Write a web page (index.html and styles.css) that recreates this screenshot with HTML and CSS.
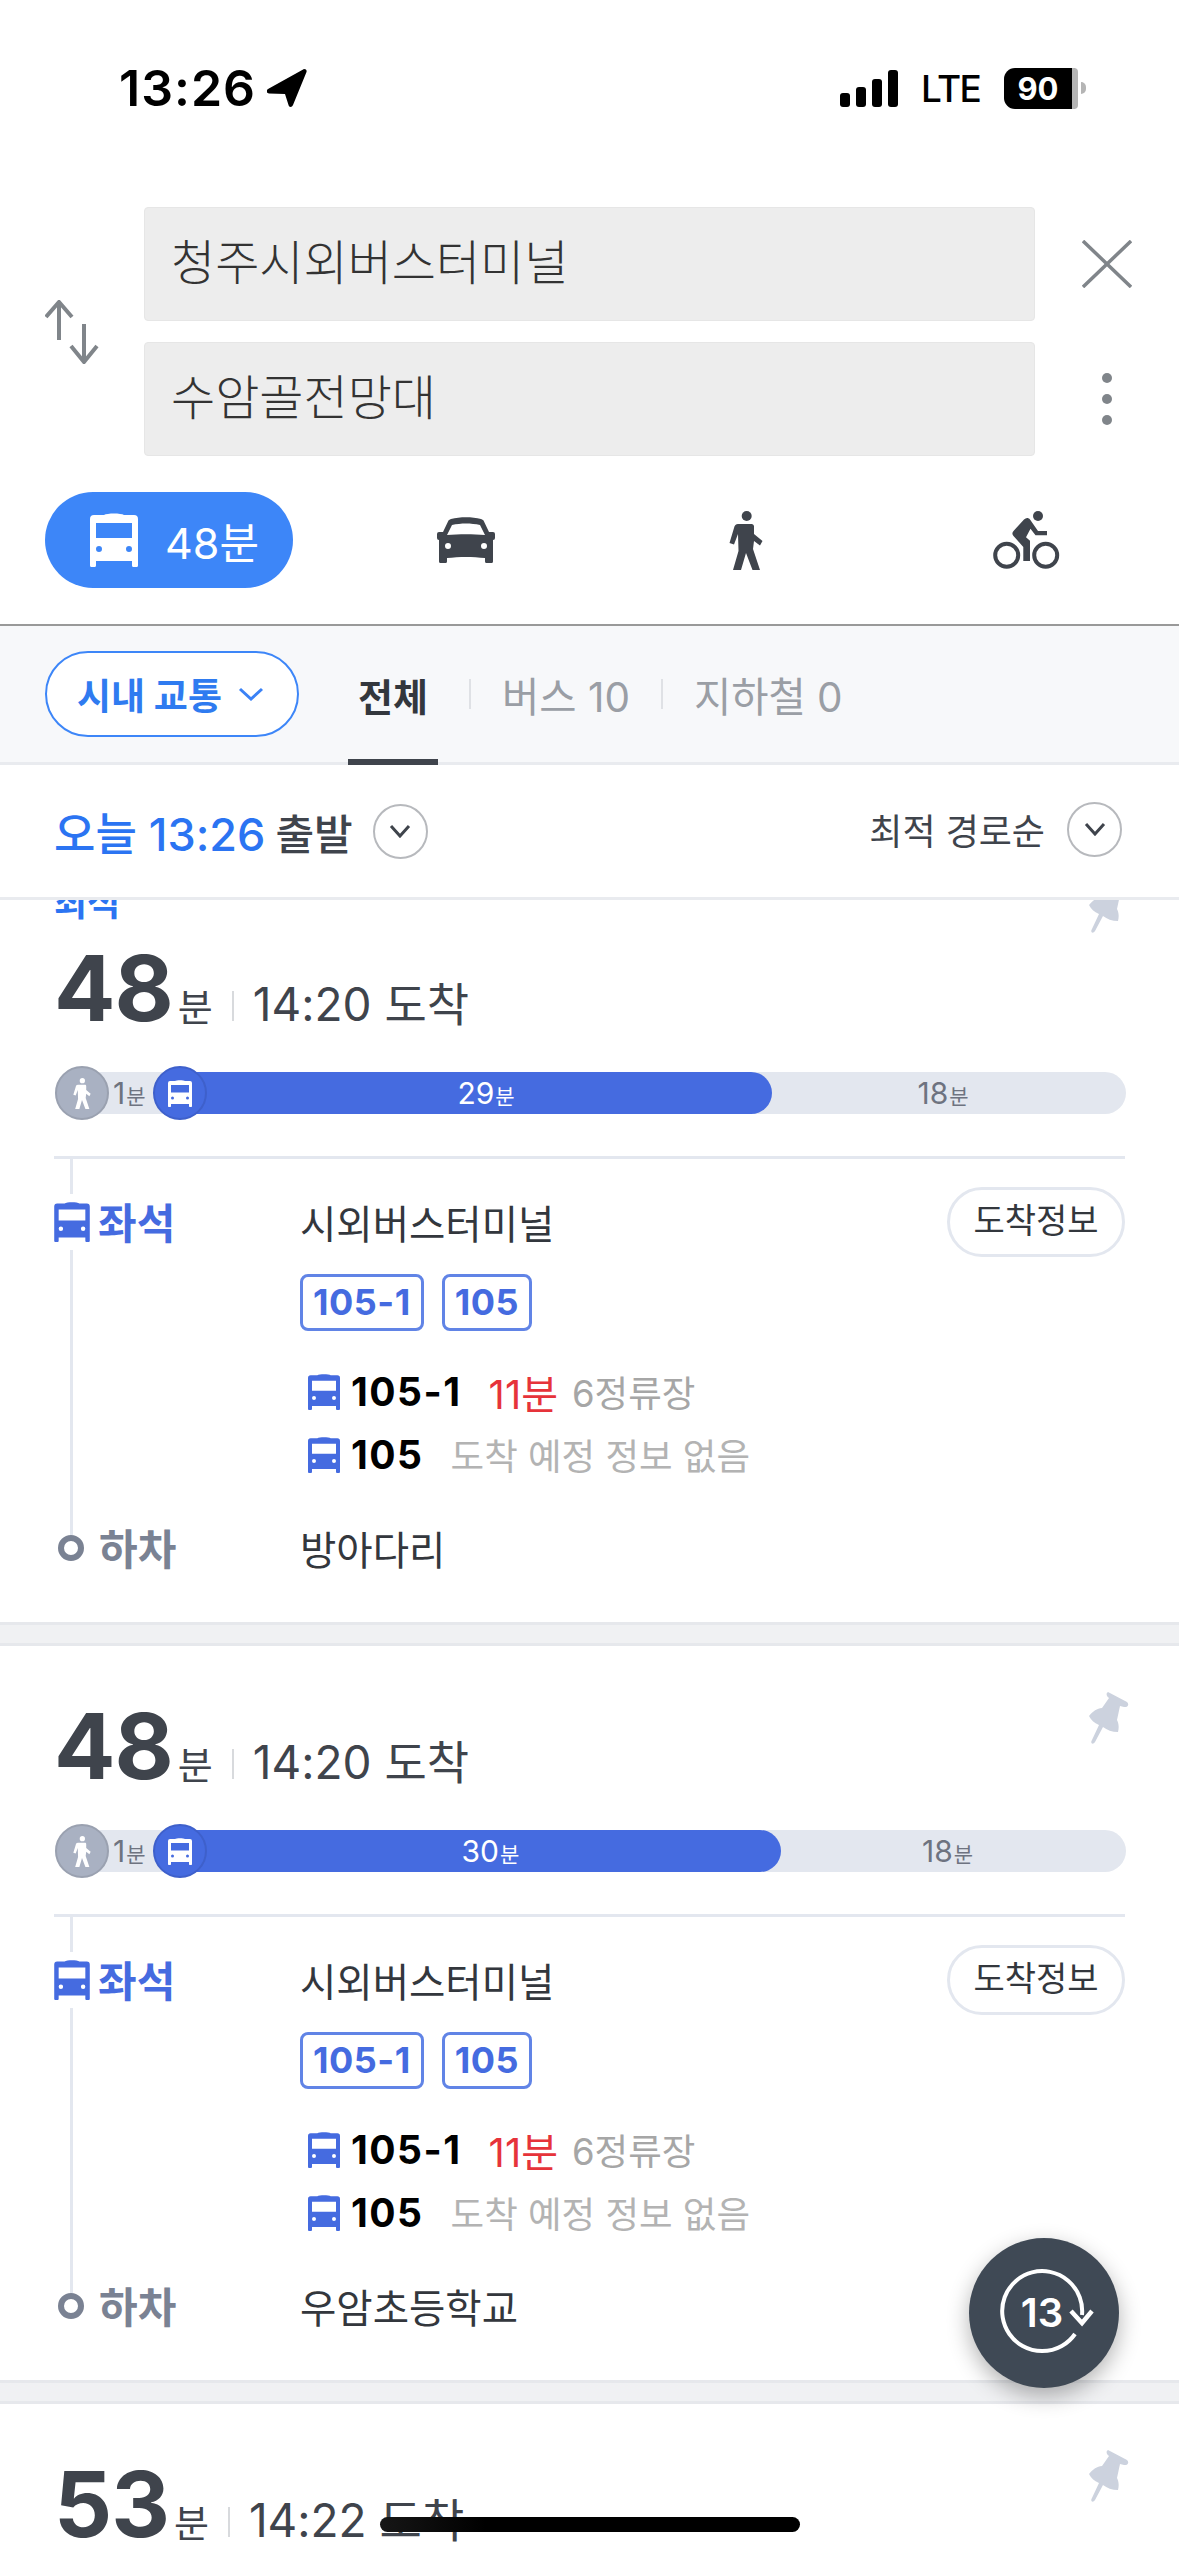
FILE: index.html
```html
<!DOCTYPE html>
<html lang="ko">
<head>
  <meta charset="UTF-8">
  <title>길찾기</title>
  <link rel="stylesheet" href="styles.css">
</head>
<body>
  <svg class="sprite" width="0" height="0">
    <symbol id="i-bus" viewBox="0 0 48 54">
      <path fill-rule="evenodd" d="M14 2c3-2 17-2 20 0h10a4 4 0 0 1 4 4v46.5a1.5 1.5 0 0 1-1.5 1.5h-3a1.5 1.5 0 0 1-1.5-1.5V48H6v4.5A1.5 1.5 0 0 1 4.5 54h-3A1.5 1.5 0 0 1 0 52.5V6a4 4 0 0 1 4-4zM6 10v15h36V10zM9 33a3 3 0 1 0 0 6 3 3 0 1 0 0-6zM39 33a3 3 0 1 0 0 6 3 3 0 1 0 0-6z"/>
    </symbol>
    <symbol id="i-walk" viewBox="0 0 34 59">
      <circle cx="17.700" cy="5" r="5"/>
      <path d="M9 13h13.500c1.500 0 2.500 1 2.500 2.500V23l8.500 7-2.500 4.500-6-4.500-1 8 7 21h-7.500L17 42l-5 17H4l5.500-19-.5-17-4 10.500-4.500-1.500L5 17c.5-2.500 2-4 4-4z"/>
    </symbol>
    <symbol id="i-pin" viewBox="0 0 42 52">
      <path d="M20 0l19 10c3 3 0 5.500-3 5l-4-1-3 14c2 4 2 8 1 12-6 0-11-2-15-5L7 50c-2 3-4.500 1.500-3.500-1L11 33c-5-2-8-5-10-9 4-5 8-7.500 13-8l7-10c-3-2-3-5-1-6z"/>
    </symbol>
  </svg>

  <div class="screen">
    <div class="statusbar">
      <div class="status-left">
        <span class="clock">13:26</span>
        <svg class="loc-arrow" viewBox="0 0 40 38"><path d="M37 0c2 0 3 1 2.500 3L26 36c-1 2.500-4 2.500-4.500 0L18 25 2 24.500c-2.500 0-3-3-1-4.500z"/></svg>
      </div>
      <div class="status-right">
        <span class="signal"><i></i><i></i><i></i><i></i></span>
        <span class="lte">LTE</span>
        <span class="battery"><span class="battery-fill">90</span><span class="battery-nub"></span></span>
      </div>
    </div>

    <div class="search">
      <svg class="swap" viewBox="0 0 54 64" fill="none" stroke="#80858a" stroke-width="4">
        <path d="M14 40V2M1 17 14 2l13 15"/>
        <path d="M39 24v38M26 46l13 16 13-16"/>
      </svg>
      <div class="search-fields">
        <div class="field">청주시외버스터미널</div>
        <div class="field">수암골전망대</div>
      </div>
      <div class="search-side">
        <div class="side-cell">
          <svg class="close" viewBox="0 0 50 48" fill="none" stroke="#80858a" stroke-width="3.500"><path d="M1 1l48 46M49 1 1 47"/></svg>
        </div>
        <div class="side-cell">
          <span class="dots"><i></i><i></i><i></i></span>
        </div>
      </div>
    </div>

    <div class="modes">
      <div class="mode">
        <div class="mode-pill">
          <svg class="mode-bus"><use href="#i-bus"/></svg>
          <span>48분</span>
        </div>
      </div>
      <div class="mode">
        <svg class="mode-car" viewBox="0 0 58 46"><path fill-rule="evenodd" d="M14 2c9-2.500 21-2.500 30 0 1.500.5 2.500 1 3 2.500L52 15h4a2 2 0 0 1 2 2v4a2 2 0 0 1-2 2v21.500a1.500 1.500 0 0 1-1.500 1.500h-5a1.500 1.500 0 0 1-1.500-1.500V41c-12-1.500-26-1.500-38 0v3.500A1.500 1.500 0 0 1 8.500 46h-5A1.500 1.500 0 0 1 2 44.500V23a2 2 0 0 1-2-2v-4a2 2 0 0 1 2-2h4l5-10.500c.5-1.500 1.500-2 3-2.500zM15 8l-5 10c12-1 26-1 38 0L43 8C34 6 24 6 15 8zM11 26a3 3 0 1 0 0 6 3 3 0 1 0 0-6zM47 26a3 3 0 1 0 0 6 3 3 0 1 0 0-6z"/></svg>
      </div>
      <div class="mode">
        <svg class="mode-walk"><use href="#i-walk"/></svg>
      </div>
      <div class="mode">
        <svg class="mode-bike" viewBox="0 0 67 58">
          <circle cx="13.700" cy="44.300" r="11.500" fill="none" stroke-width="4"/>
          <circle cx="52.700" cy="44.300" r="11.500" fill="none" stroke-width="4"/>
          <circle cx="45" cy="5" r="5" stroke="none"/>
          <path stroke="none" d="M31 8.500c2-2 4.500-2 6 0l8 11.500h9v4.300H42.500l-5-6.500-4.500 8.500 4 3.500V50h-6.700V36L20.500 25c-1.500-1.500-1.500-3.500 0-5z"/>
        </svg>
      </div>
    </div>

    <div class="tabs">
      <div class="scope">시내 교통
        <svg class="scope-chevron" viewBox="0 0 26 14" fill="none" stroke="#3b82f6" stroke-width="3"><path d="M2 2l11 10L24 2"/></svg>
      </div>
      <div class="tab tab-active">전체</div>
      <span class="tab-sep"></span>
      <div class="tab">버스 10</div>
      <span class="tab-sep"></span>
      <div class="tab">지하철 0</div>
    </div>

    <div class="depart">
      <div class="depart-left">
        <span class="depart-time">오늘 13:26</span>
        <span class="depart-word">출발</span>
        <span class="round-btn"><svg viewBox="0 0 24 14" fill="none" stroke="#3f444c" stroke-width="3"><path d="M3 2l9 10 9-10"/></svg></span>
      </div>
      <div class="depart-right">
        <span>최적 경로순</span>
        <span class="round-btn"><svg viewBox="0 0 24 14" fill="none" stroke="#3f444c" stroke-width="3"><path d="M3 2l9 10 9-10"/></svg></span>
      </div>
    </div>

    <div class="route-list">
      <section class="route route-best">
        <svg class="pin"><use href="#i-pin"/></svg>
        <div class="best-label">최적</div>
        <div class="route-time">
          <b>48</b><span class="unit">분</span><span class="time-sep"></span><span class="arrive">14:20 도착</span>
        </div>
        <div class="bar">
          <div class="seg-walk">
            <span class="bar-dot dot-walk"><svg><use href="#i-walk"/></svg></span>
            <span class="seg-text">1<small>분</small></span>
          </div>
          <div class="seg-bus" style="width: 592px">
            <span class="bar-dot dot-bus"><svg><use href="#i-bus"/></svg></span>
            <span class="seg-text">29<small>분</small></span>
          </div>
          <div class="seg-rest"><span class="seg-text">18<small>분</small></span></div>
        </div>
        <div class="legs">
          <div class="leg">
            <div class="leg-label label-board"><svg><use href="#i-bus"/></svg>좌석</div>
            <div class="leg-stop">시외버스터미널</div>
            <div class="arrive-btn">도착정보</div>
          </div>
          <div class="bus-tags"><span class="bus-tag">105-1</span><span class="bus-tag">105</span></div>
          <div class="arrivals">
            <div class="arrival"><svg><use href="#i-bus"/></svg><b>105-1</b><span class="soon">11분</span><span class="stops">6정류장</span></div>
            <div class="arrival"><svg><use href="#i-bus"/></svg><b>105</b><span class="noinfo">도착 예정 정보 없음</span></div>
          </div>
          <div class="leg leg-off">
            <div class="leg-label label-off"><span class="ring"></span>하차</div>
            <div class="leg-stop">방아다리</div>
          </div>
        </div>
      </section>
      <div class="route-gap"></div>

      <section class="route">
        <svg class="pin"><use href="#i-pin"/></svg>
        <div class="route-time">
          <b>48</b><span class="unit">분</span><span class="time-sep"></span><span class="arrive">14:20 도착</span>
        </div>
        <div class="bar">
          <div class="seg-walk">
            <span class="bar-dot dot-walk"><svg><use href="#i-walk"/></svg></span>
            <span class="seg-text">1<small>분</small></span>
          </div>
          <div class="seg-bus" style="width: 601px">
            <span class="bar-dot dot-bus"><svg><use href="#i-bus"/></svg></span>
            <span class="seg-text">30<small>분</small></span>
          </div>
          <div class="seg-rest"><span class="seg-text">18<small>분</small></span></div>
        </div>
        <div class="legs">
          <div class="leg">
            <div class="leg-label label-board"><svg><use href="#i-bus"/></svg>좌석</div>
            <div class="leg-stop">시외버스터미널</div>
            <div class="arrive-btn">도착정보</div>
          </div>
          <div class="bus-tags"><span class="bus-tag">105-1</span><span class="bus-tag">105</span></div>
          <div class="arrivals">
            <div class="arrival"><svg><use href="#i-bus"/></svg><b>105-1</b><span class="soon">11분</span><span class="stops">6정류장</span></div>
            <div class="arrival"><svg><use href="#i-bus"/></svg><b>105</b><span class="noinfo">도착 예정 정보 없음</span></div>
          </div>
          <div class="leg leg-off">
            <div class="leg-label label-off"><span class="ring"></span>하차</div>
            <div class="leg-stop">우암초등학교</div>
          </div>
        </div>
      </section>
      <div class="route-gap"></div>

      <section class="route">
        <svg class="pin"><use href="#i-pin"/></svg>
        <div class="route-time">
          <b>53</b><span class="unit">분</span><span class="time-sep"></span><span class="arrive">14:22 도착</span>
        </div>
      </section>
    </div>

    <div class="fab">
      <svg viewBox="0 0 150 150" fill="none" stroke="#fff" stroke-width="4">
        <path d="M106 96A40 40 0 1 1 113 77"/>
        <path d="M102 73l11 12 10-12" stroke-width="4.500"/>
        <text x="73" y="89" text-anchor="middle" class="fab-text">13</text>
      </svg>
    </div>
    <div class="home-bar"></div>
  </div>
</body>
</html>
```

FILE: styles.css
```css
:root {
  --blue: #3d86f8;
  --route-blue: #456be0;
  --dark: #3f444c;
  --line: #e3e7ef;
  --gray: #9a9ea5;
}

* {
  margin: 0;
  padding: 0;
  box-sizing: border-box;
}

html, body {
  width: 1179px;
  height: 2556px;
  overflow: hidden;
  background: white;
}

body {
  font-family: "Inter", "Noto Sans CJK KR", sans-serif;
  color: var(--dark);
}

.sprite {
  position: absolute;
}

i {
  display: block;
}

.screen {
  position: relative;
  width: 1179px;
  height: 2556px;
  overflow: hidden;
}

/* status bar */
.statusbar {
  height: 176px;
  display: flex;
  align-items: center;
  justify-content: space-between;
  padding: 0 93px 0 119px;
  color: black;
}

.status-left {
  display: flex;
  align-items: center;
  gap: 11px;
}

.clock {
  font-size: 50px;
  font-weight: 600;
  letter-spacing: 1px;
}

.loc-arrow {
  width: 40px;
  height: 38px;
}

.status-right {
  display: flex;
  align-items: center;
}

.signal {
  display: flex;
  align-items: flex-end;
  gap: 6px;
  height: 37px;
  margin-right: 23px;
}

.signal i {
  width: 10px;
  background: black;
  border-radius: 3px;
}

.signal i:nth-child(1) { height: 14px; }
.signal i:nth-child(2) { height: 20px; }
.signal i:nth-child(3) { height: 28px; }
.signal i:nth-child(4) { height: 37px; }

.lte {
  font-size: 37px;
  font-weight: 500;
  letter-spacing: -1.5px;
  margin-right: 26px;
  width: 57px;
}

.battery {
  display: flex;
  align-items: center;
}

.battery-fill {
  width: 74px;
  height: 41px;
  background: black;
  color: white;
  border-radius: 11px 4px 4px 11px;
  border-right: 6px solid #b5b5b5;
  font-size: 31px;
  font-weight: 700;
  line-height: 41px;
  text-align: center;
}

.battery-nub {
  width: 5px;
  height: 12px;
  margin-left: 3px;
  background: #b5b5b5;
  border-radius: 0 6px 6px 0;
}

/* search */
.search {
  display: flex;
  align-items: center;
  padding: 31px 0 0 45px;
}

.swap {
  width: 54px;
  height: 64px;
  margin-right: 45px;
  flex-shrink: 0;
}

.search-fields {
  width: 891px;
  display: flex;
  flex-direction: column;
  gap: 21px;
}

.field {
  height: 114px;
  background: #ededed;
  border: 1px solid #e6e6e6;
  border-radius: 4px;
  padding-left: 26px;
  font-size: 48px;
  line-height: 110px;
  color: #333;
  font-weight: 300;
}

.search-side {
  width: 144px;
  display: flex;
  flex-direction: column;
  gap: 21px;
}

.side-cell {
  height: 114px;
  display: flex;
  align-items: center;
  justify-content: center;
}

.close {
  width: 50px;
  height: 48px;
}

.dots {
  display: flex;
  flex-direction: column;
  gap: 11px;
}

.dots i {
  width: 10px;
  height: 10px;
  background: #80858a;
  border-radius: 50%;
}

/* transport modes */
.modes {
  display: grid;
  grid-template-columns: 281px 280px 280px 280px;
  padding: 36px 0 36px 45px;
  border-bottom: 2px solid #999;
}

.mode {
  height: 96px;
  display: flex;
  align-items: center;
  justify-content: center;
  fill: var(--dark);
  stroke: var(--dark);
  stroke-width: 0;
}

.mode-pill {
  width: 248px;
  height: 96px;
  margin-right: auto;
  background: var(--blue);
  border-radius: 48px;
  display: flex;
  align-items: center;
  padding-left: 45px;
  gap: 27px;
  color: white;
  font-size: 43px;
}

.mode-bus {
  width: 48px;
  height: 54px;
  fill: white;
}

.mode-car {
  width: 58px;
  height: 46px;
}

.mode-walk {
  width: 34px;
  height: 59px;
}

.mode-bike {
  width: 67px;
  height: 58px;
  stroke: var(--dark);
}

/* tabs */
.tabs {
  height: 139px;
  display: flex;
  align-items: center;
  padding-left: 45px;
  background: #f7f8fa;
  border-bottom: 3px solid #e9ebef;
  font-size: 40.500px;
  color: var(--gray);
}

.scope {
  width: 254px;
  height: 86px;
  display: flex;
  align-items: center;
  padding-left: 30px;
  border: 2px solid var(--blue);
  border-radius: 43px;
  background: white;
  color: #2f7bf0;
  font-size: 37px;
  font-weight: 700;
  white-space: nowrap;
}

.scope-chevron {
  width: 26px;
  height: 14px;
  margin-left: 16px;
}

.tab {
  height: 100%;
  display: flex;
  align-items: center;
  position: relative;
}

.tab-active {
  width: 90px;
  justify-content: center;
  margin-left: 49px;
  font-size: 38px;
  color: #33373d;
  font-weight: 700;
}

.tab-active::after {
  content: "";
  position: absolute;
  left: 0;
  right: 0;
  bottom: -3px;
  height: 6px;
  background: var(--dark);
}

.tab-sep {
  width: 2px;
  height: 30px;
  margin: 0 31px;
  background: #dfe1e5;
}

/* departure row */
.depart {
  height: 135px;
  display: flex;
  align-items: center;
  justify-content: space-between;
  padding: 0 57px 0 54px;
  border-bottom: 3px solid #e9ebef;
}

.depart-left,
.depart-right {
  display: flex;
  align-items: center;
}

.depart-time {
  font-size: 45px;
  font-weight: 500;
  color: #2b74f2;
}

.depart-word {
  font-size: 42px;
  font-weight: 500;
  margin-left: 10px;
}

.depart-right {
  font-size: 36px;
  gap: 22px;
  margin-top: -4px;
}

.round-btn {
  width: 55px;
  height: 55px;
  display: flex;
  align-items: center;
  justify-content: center;
  border: 2px solid #b7b9bd;
  border-radius: 50%;
  margin-left: 20px;
}

.depart-right .round-btn {
  margin-left: 0;
}

.round-btn svg {
  width: 24px;
  height: 14px;
}

/* routes */
.route-list {
  overflow: hidden;
  height: 1656px;
}

.route {
  position: relative;
  height: 734px;
  padding: 56px 54px 0;
}

.route-best {
  height: 787px;
  margin-top: -65px;
  padding-top: 46px;
}

.route-gap {
  height: 24px;
  background: #f0f1f3;
  border-top: 3px solid #e6e8ec;
  border-bottom: 3px solid #e6e8ec;
}

.pin {
  position: absolute;
  top: 46px;
  right: 49px;
  width: 42px;
  height: 52px;
  fill: #ccd2de;
}

.best-label {
  height: 44px;
  margin-bottom: 19px;
  font-size: 36px;
  font-weight: 700;
  line-height: 44px;
  color: #2b74f2;
}

.route-time {
  height: 88px;
  display: flex;
  align-items: baseline;
  margin-bottom: 40px;
  line-height: 88px;
  white-space: nowrap;
}

.route-time b {
  font-size: 91px;
  font-weight: 700;
  letter-spacing: -1px;
}

.unit {
  font-size: 38px;
  margin-left: 5px;
}

.time-sep {
  width: 2px;
  height: 30px;
  margin: 0 19px;
  background: #d8dadd;
}

.arrive {
  font-size: 46px;
}

.bar {
  position: relative;
  display: flex;
  width: 1071px;
  height: 42px;
  margin-left: 1px;
  background: var(--line);
  border-radius: 21px;
  color: #6e7380;
  font-size: 30px;
  line-height: 42px;
}

.seg-walk {
  width: 125px;
  padding-left: 58px;
}

.seg-bus {
  position: relative;
  text-align: center;
  padding-left: 20px;
  background: var(--route-blue);
  border-radius: 0 21px 21px 0;
  color: white;
}

.seg-rest {
  flex: 1;
  text-align: center;
  padding-right: 12px;
}

.seg-text small {
  font-size: 21px;
  margin-left: 1px;
}

.bar-dot {
  position: absolute;
  top: -6px;
  width: 54px;
  height: 54px;
  display: flex;
  align-items: center;
  justify-content: center;
  border-radius: 50%;
  fill: white;
}

.dot-walk {
  left: 0;
  background: #a9b1c2;
  border: 2px solid #9aa1b0;
}

.dot-walk svg {
  width: 18px;
  height: 31px;
}

.dot-bus {
  left: -27px;
  background: var(--route-blue);
  border: 2px solid #3e60cb;
}

.dot-bus svg {
  width: 24px;
  height: 27px;
}

/* legs */
.legs {
  position: relative;
  margin-top: 42px;
  padding-top: 28px;
  border-top: 3px solid var(--line);
}

.legs::before {
  content: "";
  position: absolute;
  left: 16px;
  top: 0;
  bottom: 48px;
  width: 3px;
  background: var(--line);
}

.leg {
  position: relative;
  display: flex;
  align-items: center;
  height: 70px;
  font-size: 39.500px;
}

.leg-label {
  width: 246px;
  display: flex;
  align-items: center;
  padding-bottom: 4px;
  font-size: 42px;
  font-weight: 700;
}

.label-board {
  color: var(--route-blue);
  fill: var(--route-blue);
}

.label-board svg {
  width: 36px;
  height: 40px;
  margin: 4px 8px 0 0;
  background: white;
  box-shadow: 0 -8px 0 white, 0 8px 0 white;
}

.label-off {
  color: #7a8293;
}

.ring {
  width: 26px;
  height: 26px;
  margin: 4px 15px 0 4px;
  border: 6px solid #7a8293;
  border-radius: 50%;
  background: white;
}

.leg-stop {
  flex: 1;
  padding-bottom: 2px;
  color: #33373d;
}

.arrive-btn {
  width: 178px;
  height: 70px;
  border: 3px solid var(--line);
  border-radius: 35px;
  text-align: center;
  font-size: 34px;
  line-height: 62px;
  background: white;
  color: #33373d;
}

.bus-tags {
  display: flex;
  gap: 18px;
  margin: 17px 0 0 246px;
}

.bus-tag {
  height: 57px;
  padding: 0 10px;
  border: 3px solid #6184e6;
  border-radius: 8px;
  font-size: 36px;
  font-weight: 700;
  letter-spacing: 0.5px;
  line-height: 51px;
  color: var(--route-blue);
}

.arrivals {
  margin: 29px 0 27px 254px;
}

.arrival {
  height: 63px;
  display: flex;
  align-items: center;
  font-size: 36.500px;
  fill: var(--route-blue);
  white-space: nowrap;
}

.arrival svg {
  width: 32px;
  height: 36px;
  margin-right: 11px;
}

.arrival b {
  color: black;
  font-size: 39px;
  font-weight: 700;
  letter-spacing: 1.500px;
  margin-right: 27px;
}

.soon {
  color: #e6333a;
  font-size: 40px;
  margin-right: 14px;
}

.stops {
  color: #a6a6a6;
}

.noinfo {
  color: #b3b3b3;
}

/* floating button, home indicator */
.fab {
  position: absolute;
  left: 969px;
  top: 2238px;
  width: 150px;
  height: 150px;
  background: #3f4955;
  border-radius: 50%;
  box-shadow: 0 8px 22px rgba(0, 0, 0, 0.3);
}

.fab-text {
  font-size: 40px;
  font-weight: 600;
  fill: white;
  stroke: none;
}

.home-bar {
  position: absolute;
  left: 380px;
  top: 2517px;
  width: 420px;
  height: 15px;
  background: linear-gradient(90deg, #161616, black 25%);
  border-radius: 8px;
}
```
